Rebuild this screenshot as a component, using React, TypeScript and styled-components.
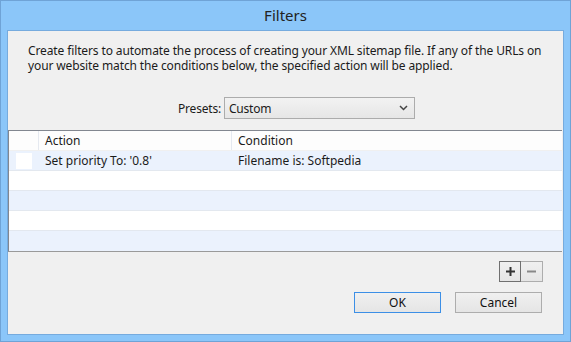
import React from 'react';
import styled, { createGlobalStyle } from 'styled-components';

const GlobalStyle = createGlobalStyle`
  html, body {
    margin: 0;
    padding: 0;
    width: 571px;
    height: 342px;
    overflow: hidden;
    background: #8bc6f9;
  }
  * { box-sizing: border-box; }
`;

const Window = styled.div`
  width: 571px;
  height: 342px;
  display: flex;
  flex-direction: column;
  background: #8bc6f9;
  border: 1px solid #6fa3d6;
  font-family: "Noto Sans", "Open Sans", sans-serif;
  font-size: 12px;
  color: #1b1b1b;
`;

const TitleBar = styled.div`
  height: 29px;
  display: flex;
  align-items: center;
  justify-content: center;
  font-size: 15px;
  color: #222;
  padding-bottom: 2px;
`;

const Panel = styled.div`
  flex: 1;
  margin: 0 6px 6px 6px;
  background: #f0f0f0;
  border: 1px solid #76abde;
  display: flex;
  flex-direction: column;
`;

const Description = styled.p`
  margin: 12px 20px 0 20px;
  line-height: 15px;
  letter-spacing: -0.12px;
`;

const PresetsRow = styled.div`
  display: flex;
  align-items: center;
  gap: 3px;
  margin: 24px 0 0 170px;
  letter-spacing: -0.2px;
`;

const Select = styled.div`
  width: 191px;
  height: 22px;
  border: 1px solid #acacac;
  background: linear-gradient(#f2f2f2, #e6e6e6);
  display: flex;
  align-items: center;
  justify-content: space-between;
  padding: 0 6px 0 4px;
`;

const Table = styled.div`
  margin: 11px 1px 0 0;
  border-top: 1px solid #828790;
  border-left: 1px solid #828790;
  border-bottom: 1px solid #9a9a9a;
  background: #fff;
`;

const Row = styled.div<{ $shade?: 'header' | 'blue' | 'white' }>`
  display: grid;
  grid-template-columns: 30px 193px 1fr;
  height: 20px;
  background: ${p => (p.$shade === 'blue' ? '#ebf2fd' : p.$shade === 'header' ? '#fdfdfd' : '#ffffff')};
  border-bottom: 1px solid ${p => (p.$shade === 'header' ? '#f0f0f0' : '#e3e8ef')};
  &:last-child { border-bottom: none; }
`;

const Cell = styled.div<{ $divider?: boolean }>`
  display: flex;
  align-items: center;
  padding-left: 6px;
  white-space: nowrap;
  border-right: 1px solid ${p => (p.$divider ? '#e5e9f0' : 'transparent')};
`;

const CheckCell = styled(Cell)`
  padding-left: 7px;
`;

const CheckBox = styled.div`
  width: 16px;
  height: 16px;
  background: #fff;
`;

const SmallRow = styled.div`
  display: flex;
  justify-content: flex-end;
  margin: 9px 20px 0 0;
`;

const IconButton = styled.button<{ $active?: boolean }>`
  width: 22px;
  height: 21px;
  padding: 0;
  margin: 0;
  display: flex;
  align-items: center;
  justify-content: center;
  background: linear-gradient(#f0f0f0, #e5e5e5);
  border: 1px solid ${p => (p.$active ? '#707070' : '#adadad')};
  & + & { border-left: none; }
`;

const ButtonRow = styled.div`
  display: flex;
  justify-content: flex-end;
  gap: 14px;
  margin: 10px 21px 0 0;
`;

const DialogButton = styled.button<{ $default?: boolean }>`
  width: 87px;
  height: 21px;
  font-family: "Noto Sans", "Open Sans", sans-serif;
  font-size: 12px;
  color: #111;
  background: linear-gradient(#f0f0f0, #e5e5e5);
  border: 1px solid ${p => (p.$default ? '#3c8fe6' : '#adadad')};
  padding: 0;
`;

const rows: { action: string; condition: string; shade: 'blue' | 'white' }[] = [
  { action: "Set priority To: '0.8'", condition: 'Filename is: Softpedia', shade: 'blue' },
  { action: '', condition: '', shade: 'white' },
  { action: '', condition: '', shade: 'blue' },
  { action: '', condition: '', shade: 'white' },
  { action: '', condition: '', shade: 'blue' },
];

export default function App() {
  return (
    <>
      <GlobalStyle />
      <Window>
        <TitleBar>Filters</TitleBar>
        <Panel>
          <Description>
            Create filters to automate the process of creating your XML sitemap file. If any of the URLs on
            your website match the conditions below, the specified action will be applied.
          </Description>
          <PresetsRow>
            <span>Presets:</span>
            <Select>
              <span>Custom</span>
              <svg width="9" height="6" viewBox="0 0 9 6">
                <path d="M1 1 L4.5 4.5 L8 1" fill="none" stroke="#444" strokeWidth="1.5" />
              </svg>
            </Select>
          </PresetsRow>
          <Table>
            <Row $shade="header">
              <Cell $divider />
              <Cell $divider>Action</Cell>
              <Cell>Condition</Cell>
            </Row>
            {rows.map((r, i) => (
              <Row key={i} $shade={r.shade}>
                <CheckCell>{r.action && <CheckBox />}</CheckCell>
                <Cell>{r.action}</Cell>
                <Cell>{r.condition}</Cell>
              </Row>
            ))}
          </Table>
          <SmallRow>
            <IconButton $active>
              <svg width="11" height="11" viewBox="0 0 11 11">
                <path d="M5.5 1 V10 M1 5.5 H10" stroke="#333" strokeWidth="2" />
              </svg>
            </IconButton>
            <IconButton>
              <svg width="11" height="11" viewBox="0 0 11 11">
                <path d="M1 5.5 H10" stroke="#888" strokeWidth="2" />
              </svg>
            </IconButton>
          </SmallRow>
          <ButtonRow>
            <DialogButton $default>OK</DialogButton>
            <DialogButton>Cancel</DialogButton>
          </ButtonRow>
        </Panel>
      </Window>
    </>
  );
}
